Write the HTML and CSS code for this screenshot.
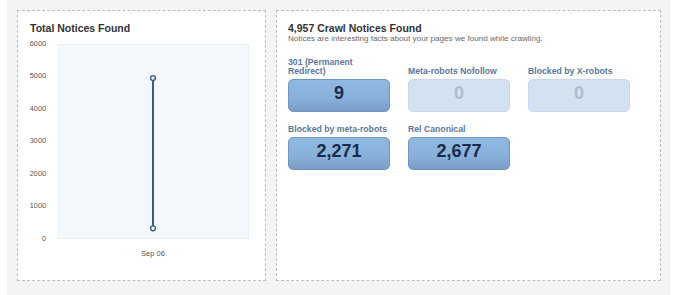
FILE: index.html
```html
<!DOCTYPE html>
<html lang="en">
<head>
  <meta charset="UTF-8">
  <title>Crawl Notices</title>
  <link rel="stylesheet" href="styles.css">
</head>
<body>
  <div class="page">
    <!-- Chart panel -->
    <div class="panel chart-panel">
      <h3 class="panel-title">Total Notices Found</h3>
      <svg class="chart" width="230" height="226" viewBox="0 0 230 226">
        <g class="axis-labels">
          <text x="18" y="6">6000</text>
          <text x="18" y="38.5">5000</text>
          <text x="18" y="71">4000</text>
          <text x="18" y="103.5">3000</text>
          <text x="18" y="136">2000</text>
          <text x="18" y="168.5">1000</text>
          <text x="18" y="201">0</text>
        </g>
        <rect class="plot" x="30.5" y="6.5" width="190" height="194"></rect>
        <line class="series" x1="125" y1="40" x2="125" y2="190.3"></line>
        <circle class="point" cx="125" cy="40" r="2.4"></circle>
        <circle class="point" cx="125" cy="190.3" r="2.4"></circle>
        <text class="x-label" x="125" y="216">Sep 06</text>
      </svg>
    </div>

    <!-- Notices panel -->
    <div class="panel notices-panel">
      <h3 class="panel-title">4,957 Crawl Notices Found</h3>
      <p class="panel-sub">Notices are interesting facts about your pages we found while crawling.</p>
      <div class="notice-grid">
        <div class="notice">
          <div class="notice-label">301 (Permanent Redirect)</div>
          <div class="notice-box">9</div>
        </div>
        <div class="notice">
          <div class="notice-label">Meta-robots Nofollow</div>
          <div class="notice-box empty">0</div>
        </div>
        <div class="notice">
          <div class="notice-label">Blocked by X-robots</div>
          <div class="notice-box empty">0</div>
        </div>
        <div class="notice">
          <div class="notice-label">Blocked by meta-robots</div>
          <div class="notice-box">2,271</div>
        </div>
        <div class="notice">
          <div class="notice-label">Rel Canonical</div>
          <div class="notice-box">2,677</div>
        </div>
      </div>
    </div>
  </div>
</body>
</html>
```

FILE: styles.css
```css
body {
  font-family: "Liberation Sans", Arial, sans-serif;
  margin: 0;
  padding: 0;
  background-color: #fff;
}

.page {
  display: flex;
  gap: 10px;
  width: 644px;
  height: 295px;
  margin-left: 7px;
  padding: 10px 9px 0 10px;
  background-color: #f4f4f4;
}

.panel {
  height: 271px;
  box-sizing: border-box;
  background-color: #fff;
  border: 1px dashed #bdbdbd;
  padding: 11px 10px 0 11px;
}

.chart-panel {
  width: 249px;
  padding-left: 12px;
}

.notices-panel {
  width: 385px;
}

.panel-title {
  margin: 0;
  font-size: 10.5px;
  line-height: 12px;
  font-weight: bold;
  color: #333;
}

.panel-sub {
  margin: 0;
  font-size: 8.1px;
  line-height: 10px;
  color: #6a6a6a;
}

/* chart */
.chart {
  display: block;
  margin: 4px 0 0 -2px;
}

.axis-labels text {
  font-size: 7.3px;
  fill: #555;
  text-anchor: end;
  dominant-baseline: middle;
}

.plot {
  fill: #f4f8fd;
  stroke: #e6eef8;
  stroke-width: 1;
}

.series {
  stroke: #3b5a8c;
  stroke-width: 2;
}

.point {
  fill: #fff;
  stroke: #3b5a8c;
  stroke-width: 1.4;
}

.x-label {
  font-size: 7.5px;
  fill: #555;
  text-anchor: middle;
  dominant-baseline: middle;
}

/* notice boxes */
.notice-grid {
  display: grid;
  grid-template-columns: repeat(3, 102px);
  column-gap: 18px;
  row-gap: 13px;
  align-items: end;
  margin-top: 14px;
}

.notice-label {
  font-size: 8.7px;
  line-height: 9px;
  font-weight: bold;
  color: #5a779f;
  margin-bottom: 3px;
}

.notice-box {
  height: 33px;
  box-sizing: border-box;
  padding-bottom: 4px;
  border: 1px solid #7196c0;
  border-radius: 5px;
  background: linear-gradient(#8fb9e2, #88b0da 60%, #7a9dc6);
  text-align: center;
  font-size: 18px;
  line-height: 27px;
  font-weight: bold;
  color: #1b2c49;
}

.notice-box.empty {
  border-color: #c7d8eb;
  background: #d3e2f1;
  color: #a9bdd5;
}
```
